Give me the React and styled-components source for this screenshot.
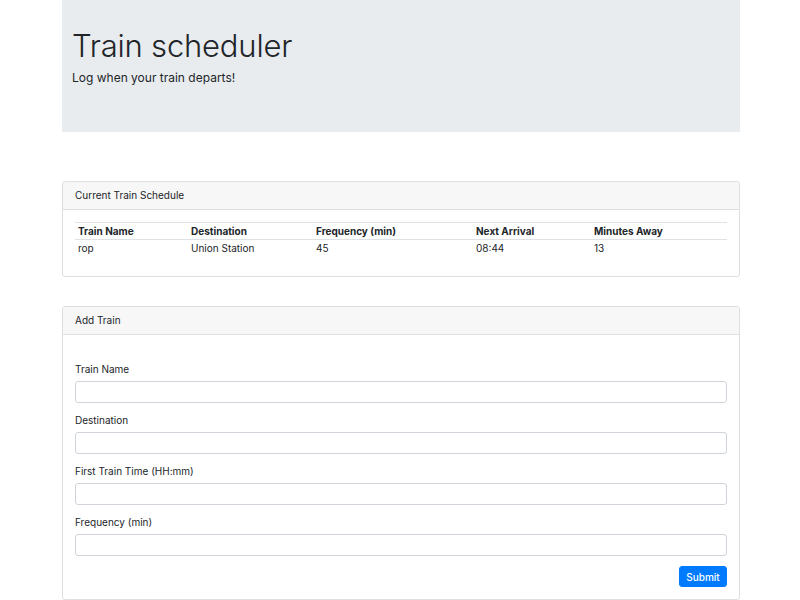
import React from "react";
import styled, { createGlobalStyle } from "styled-components";

const GlobalStyle = createGlobalStyle`
    body {
        margin: 0;
        background: #fff;
        font-family: Inter, "Noto Sans", "Liberation Sans", sans-serif;
        color: #212529;
    }
`;

const trains = [
    { name: "rop", destination: "Union Station", frequency: 45, next: "08:44", away: 13 },
];

const columns = [
    { label: "Train Name", width: 113 },
    { label: "Destination", width: 125 },
    { label: "Frequency (min)", width: 160 },
    { label: "Next Arrival", width: 118 },
    { label: "Minutes Away", width: 136 },
];

const fields = ["Train Name", "Destination", "First Train Time (HH:mm)", "Frequency (min)"];

const App = () => {
    return (
        <>
            <GlobalStyle />
            <Container>
                <Jumbotron>
                    <Title>Train scheduler</Title>
                    <Lead>Log when your train departs!</Lead>
                </Jumbotron>

                <Card $top={49}>
                    <CardHeader>Current Train Schedule</CardHeader>
                    <CardBody>
                        <Table>
                            <colgroup>
                                {columns.map((c) => (
                                    <Col key={c.label} $width={c.width} />
                                ))}
                            </colgroup>
                            <thead>
                                <tr>
                                    {columns.map((c) => (
                                        <Th key={c.label}>{c.label}</Th>
                                    ))}
                                </tr>
                            </thead>
                            <tbody>
                                {trains.map((t, i) => (
                                    <tr key={i}>
                                        <Td>{t.name}</Td>
                                        <Td>{t.destination}</Td>
                                        <Td>{t.frequency}</Td>
                                        <Td>{t.next}</Td>
                                        <Td>{t.away}</Td>
                                    </tr>
                                ))}
                            </tbody>
                        </Table>
                    </CardBody>
                </Card>

                <Card $top={29}>
                    <CardHeader>Add Train</CardHeader>
                    <FormBody>
                        {fields.map((f) => (
                            <FormGroup key={f}>
                                <Label>{f}</Label>
                                <Input type="text" />
                            </FormGroup>
                        ))}
                        <Actions>
                            <SubmitButton>Submit</SubmitButton>
                        </Actions>
                    </FormBody>
                </Card>
            </Container>
        </>
    );
};

const Container = styled.div`
    width: 678px;
    margin-left: 62px;
`;

const Jumbotron = styled.div`
    background: #e9ecef;
    height: 132px;
    box-sizing: border-box;
    padding: 27px 10px 0;
`;

const Title = styled.h1`
    margin: 0;
    font-size: 31px;
    font-weight: 300;
    line-height: 38px;
    letter-spacing: -0.2px;
    color: #212529;
`;

const Lead = styled.p`
    margin: 4px 0 0;
    font-size: 12px;
    font-weight: 400;
    line-height: 18px;
`;

const Card = styled.div`
    margin-top: ${(p) => p.$top}px;
    border: 1px solid #dfdfdf;
    border-radius: 3px;
    overflow: hidden;
`;

const CardHeader = styled.div`
    background: #f7f7f7;
    border-bottom: 1px solid #dfdfdf;
    height: 27px;
    line-height: 27px;
    padding: 0 12px;
    font-size: 10px;
`;

const CardBody = styled.div`
    padding: 12px 12px 20px;
`;

const Table = styled.table`
    width: 652px;
    table-layout: fixed;
    border-collapse: collapse;
    font-size: 10px;
    border-top: 1px solid #dee2e6;
`;

const Col = styled.col`
    width: ${(p) => p.$width}px;
`;

const Th = styled.th`
    text-align: left;
    font-weight: 700;
    padding: 0 3px;
    height: 16px;
    border-bottom: 1px solid #dee2e6;
`;

const Td = styled.td`
    padding: 0 3px;
    height: 16px;
`;

const FormBody = styled.div`
    padding: 27px 12px 12px;
    display: flex;
    flex-direction: column;
`;

const FormGroup = styled.div`
    display: flex;
    flex-direction: column;
    margin-bottom: 10px;
`;

const Label = styled.label`
    font-size: 10px;
    line-height: 14px;
    margin-bottom: 5px;
`;

const Input = styled.input`
    height: 22px;
    box-sizing: border-box;
    border: 1px solid #ced4da;
    border-radius: 3px;
    padding: 0 6px;
    font-size: 10px;
    outline: none;
`;

const Actions = styled.div`
    display: flex;
    justify-content: flex-end;
`;

const SubmitButton = styled.button`
    background: #007bff;
    color: #fff;
    border: 1px solid #007bff;
    border-radius: 3px;
    width: 48px;
    height: 21px;
    padding: 0;
    font-family: inherit;
    font-size: 10px;
    font-weight: 500;
    cursor: pointer;
`;

export default App;
